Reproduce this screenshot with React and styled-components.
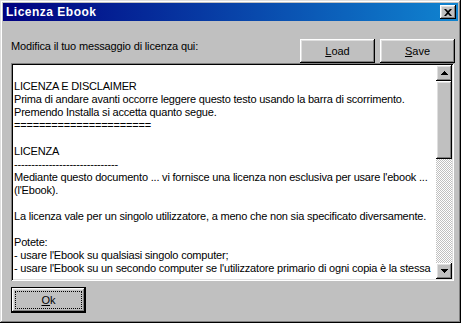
import React from "react";
import styled, { createGlobalStyle } from "styled-components";

const Global = createGlobalStyle`
  html, body { margin: 0; padding: 0; background: #c0c0c0; }
  body { font-family: "Liberation Sans", Arial, sans-serif; }
`;

const Window = styled.div`
  box-sizing: border-box;
  width: 461px;
  height: 323px;
  padding: 3px;
  background: #c0c0c0;
  box-shadow: inset -1px -1px #000, inset 1px 1px #dfdfdf,
    inset -2px -2px #808080, inset 2px 2px #fff;
  display: flex;
  flex-direction: column;
`;

const TitleBar = styled.div`
  height: 18px;
  display: flex;
  align-items: center;
  justify-content: space-between;
  padding: 0 2px 0 3px;
  background: linear-gradient(to right, #000080, #1084d0);
`;

const Title = styled.span`
  color: #fff;
  font-weight: bold;
  font-size: 12px;
  letter-spacing: 0.5px;
`;

const raised = `
  background: #c0c0c0;
  box-shadow: inset -1px -1px #000, inset 1px 1px #fff,
    inset -2px -2px #808080, inset 2px 2px #dfdfdf;
`;

const CloseBtn = styled.div`
  width: 16px;
  height: 14px;
  ${raised}
  display: flex;
  align-items: center;
  justify-content: center;
`;

const Content = styled.div`
  flex: 1;
  display: flex;
  flex-direction: column;
  padding: 18px 3px 0 8px;
`;

const TopRow = styled.div`
  display: flex;
  align-items: flex-start;
  gap: 5px;
`;

const Label = styled.div`
  flex: 1;
  font-size: 11px;
  line-height: 13px;
  letter-spacing: -0.15px;
  padding-top: 1px;
  color: #000;
`;

const Button = styled.div`
  box-sizing: border-box;
  width: ${(p) => p.w || 75}px;
  height: ${(p) => p.h || 24}px;
  ${raised}
  display: flex;
  align-items: center;
  justify-content: center;
  font-size: 11px;
  color: #000;
  u { text-decoration: underline; text-underline-offset: 1px; }
`;

const DefaultButton = styled(Button)`
  box-shadow: inset 0 0 0 1px #000, inset -2px -2px #000, inset 2px 2px #fff,
    inset -3px -3px #808080, inset 3px 3px #dfdfdf;
`;

const Focus = styled.div`
  position: absolute;
  inset: 4px;
  border: 1px dotted #000;
`;

const OkWrap = styled.div`
  position: relative;
  margin-top: 6px;
  width: 75px;
`;

const TextBox = styled.div`
  height: 218px;
  margin-right: 1px;
  padding: 2px;
  background: #fff;
  box-shadow: inset 1px 1px #808080, inset -1px -1px #fff,
    inset 2px 2px #000, inset -2px -2px #dfdfdf;
  display: flex;
  box-sizing: border-box;
`;

const Text = styled.pre`
  flex: 1;
  margin: 0;
  padding: 2px 0 0 1px;
  overflow: hidden;
  font-family: "Liberation Sans", Arial, sans-serif;
  font-size: 11px;
  line-height: 13px;
  letter-spacing: -0.2px;
  color: #000;
  white-space: pre;
`;

const ScrollBar = styled.div`
  width: 16px;
  display: flex;
  flex-direction: column;
`;

const ArrowBtn = styled.div`
  width: 16px;
  height: 16px;
  ${raised}
  display: flex;
  align-items: center;
  justify-content: center;
`;

const Thumb = styled.div`
  height: 78px;
  ${raised}
`;

const Track = styled.div`
  flex: 1;
  background: repeating-conic-gradient(#c0c0c0 0 25%, #fff 0 50%) 0 0 / 2px 2px;
`;

const Arrow = ({ down }) => (
  <svg width="7" height="4" viewBox="0 0 7 4">
    <path
      d={down ? "M0 0h7v1H6v1H5v1H4v1H3V3H2V2H1V1H0z" : "M3 0h1v1h1v1h1v1h1v1H0V3h1V2h1V1h1z"}
      fill="#000"
    />
  </svg>
);

const licenseText = `
LICENZA E DISCLAIMER
Prima di andare avanti occorre leggere questo testo usando la barra di scorrimento.
Premendo Installa si accetta quanto segue.
======================

LICENZA
------------------------------
Mediante questo documento ... vi fornisce una licenza non esclusiva per usare l'ebook ...
(l'Ebook).

La licenza vale per un singolo utilizzatore, a meno che non sia specificato diversamente.

Potete:
- usare l'Ebook su qualsiasi singolo computer;
- usare l'Ebook su un secondo computer se l'utilizzatore primario di ogni copia è la stessa`;

export default function App() {
  return (
    <>
      <Global />
      <Window>
        <TitleBar>
          <Title>Licenza Ebook</Title>
          <CloseBtn>
            <svg width="8" height="7" viewBox="0 0 8 7">
              <path
                d="M0 0h2l2 2 2-2h2L5 3.5 8 7H6L4 5 2 7H0l3-3.5z"
                fill="#000"
              />
            </svg>
          </CloseBtn>
        </TitleBar>
        <Content>
          <TopRow>
            <Label>Modifica il tuo messaggio di licenza qui:</Label>
            <Button>
              <span><u>L</u>oad</span>
            </Button>
            <Button>
              <span><u>S</u>ave</span>
            </Button>
          </TopRow>
          <TextBox>
            <Text>{licenseText}</Text>
            <ScrollBar>
              <ArrowBtn><Arrow /></ArrowBtn>
              <Thumb />
              <Track />
              <ArrowBtn><Arrow down /></ArrowBtn>
            </ScrollBar>
          </TextBox>
          <OkWrap>
            <DefaultButton h={26}>
              <span><u>O</u>k</span>
            </DefaultButton>
            <Focus />
          </OkWrap>
        </Content>
      </Window>
    </>
  );
}
